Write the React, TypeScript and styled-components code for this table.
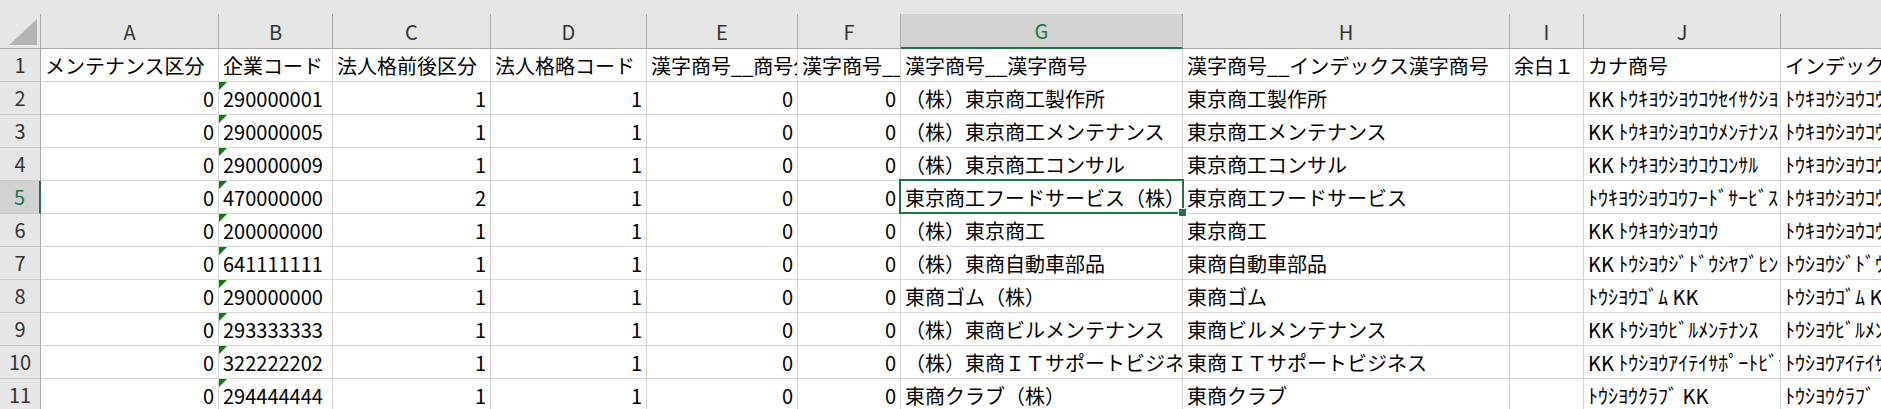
import React from 'react';
import styled, { createGlobalStyle, css } from 'styled-components';

const GlobalStyle = createGlobalStyle`
  html, body {
    margin: 0;
    padding: 0;
    background: #ffffff;
    overflow: hidden;
  }
  body {
    font-family: "Noto Sans CJK JP", "Noto Sans", sans-serif;
  }
`;

const COL_WIDTHS = [41, 178, 114, 158, 156, 151, 103, 282, 327, 74, 197, 220];
const COL_LETTERS = ['A', 'B', 'C', 'D', 'E', 'F', 'G', 'H', 'I', 'J', 'K'];
const SELECTED_COL = 6; // G
const SELECTED_ROW = 5;

type Align = 'left' | 'right';
const ALIGNS: Align[] = ['right', 'left', 'right', 'right', 'right', 'right', 'left', 'left', 'left', 'left', 'left'];

const HEADER_ROW = [
  'メンテナンス区分',
  '企業コード',
  '法人格前後区分',
  '法人格略コード',
  '漢字商号__商号分類',
  '漢字商号__漢字商号区分',
  '漢字商号__漢字商号',
  '漢字商号__インデックス漢字商号',
  '余白１',
  'カナ商号',
  'インデックスカナ商号',
];

const DATA: string[][] = [
  ['0', '290000001', '1', '1', '0', '0', '（株）東京商工製作所', '東京商工製作所', '', 'KK ﾄｳｷﾖｳｼﾖｳｺｳｾｲｻｸｼﾖ', 'ﾄｳｷﾖｳｼﾖｳｺｳｾｲｻｸｼﾖ'],
  ['0', '290000005', '1', '1', '0', '0', '（株）東京商工メンテナンス', '東京商工メンテナンス', '', 'KK ﾄｳｷﾖｳｼﾖｳｺｳﾒﾝﾃﾅﾝｽ', 'ﾄｳｷﾖｳｼﾖｳｺｳﾒﾝﾃﾅﾝｽ'],
  ['0', '290000009', '1', '1', '0', '0', '（株）東京商工コンサル', '東京商工コンサル', '', 'KK ﾄｳｷﾖｳｼﾖｳｺｳｺﾝｻﾙ', 'ﾄｳｷﾖｳｼﾖｳｺｳｺﾝｻﾙ'],
  ['0', '470000000', '2', '1', '0', '0', '東京商工フードサービス（株）', '東京商工フードサービス', '', 'ﾄｳｷﾖｳｼﾖｳｺｳﾌｰﾄﾞｻｰﾋﾞｽ', 'ﾄｳｷﾖｳｼﾖｳｺｳﾌｰﾄﾞｻｰﾋﾞｽ'],
  ['0', '200000000', '1', '1', '0', '0', '（株）東京商工', '東京商工', '', 'KK ﾄｳｷﾖｳｼﾖｳｺｳ', 'ﾄｳｷﾖｳｼﾖｳｺｳ'],
  ['0', '641111111', '1', '1', '0', '0', '（株）東商自動車部品', '東商自動車部品', '', 'KK ﾄｳｼﾖｳｼﾞﾄﾞｳｼﾔﾌﾞﾋﾝ', 'ﾄｳｼﾖｳｼﾞﾄﾞｳｼﾔﾌﾞﾋﾝ'],
  ['0', '290000000', '1', '1', '0', '0', '東商ゴム（株）', '東商ゴム', '', 'ﾄｳｼﾖｳｺﾞﾑ KK', 'ﾄｳｼﾖｳｺﾞﾑ KK'],
  ['0', '293333333', '1', '1', '0', '0', '（株）東商ビルメンテナンス', '東商ビルメンテナンス', '', 'KK ﾄｳｼﾖｳﾋﾞﾙﾒﾝﾃﾅﾝｽ', 'ﾄｳｼﾖｳﾋﾞﾙﾒﾝﾃﾅﾝｽ'],
  ['0', '322222202', '1', '1', '0', '0', '（株）東商ＩＴサポートビジネス', '東商ＩＴサポートビジネス', '', 'KK ﾄｳｼﾖｳｱｲﾃｲｻﾎﾟｰﾄﾋﾞｼﾞﾈｽ', 'ﾄｳｼﾖｳｱｲﾃｲｻﾎﾟｰﾄﾋﾞｼﾞﾈｽ'],
  ['0', '294444444', '1', '1', '0', '0', '東商クラブ（株）', '東商クラブ', '', 'ﾄｳｼﾖｳｸﾗﾌﾞ KK', 'ﾄｳｼﾖｳｸﾗﾌﾞ'],
];

const Sheet = styled.div`
  display: flex;
  flex-direction: column;
  width: 1881px;
  height: 409px;
  overflow: hidden;
  background: #ffffff;
`;

const TopBand = styled.div`
  flex: none;
  height: 14px;
  background: #e6e6e6;
`;

const Grid = styled.div`
  display: grid;
  grid-template-columns: ${COL_WIDTHS.map((w) => `${w}px`).join(' ')};
  grid-template-rows: 35px repeat(11, 33px);
  font-size: 20px;
`;

const CornerCell = styled.div`
  box-sizing: border-box;
  display: flex;
  align-items: flex-end;
  justify-content: flex-end;
  padding: 0 3px 3px 0;
  background: #e6e6e6;
  border-right: 1px solid #ababab;
  border-bottom: 1px solid #ababab;
`;

const CornerTriangle = styled.div`
  width: 28px;
  height: 26px;
  background: #b4b4b4;
  clip-path: polygon(100% 0, 100% 100%, 0 100%);
`;

const ColHeader = styled.div<{ $selected?: boolean }>`
  box-sizing: border-box;
  display: flex;
  align-items: center;
  justify-content: center;
  background: #e6e6e6;
  color: #333333;
  border-right: 1px solid #ababab;
  border-bottom: 1px solid #ababab;
  line-height: 1;
  padding-top: 1px;
  ${(p) =>
    p.$selected &&
    css`
      background: #d2d2d2;
      color: #217346;
      border-bottom: 2px solid #217346;
    `}
`;

const RowHeader = styled.div<{ $selected?: boolean }>`
  box-sizing: border-box;
  display: flex;
  align-items: center;
  justify-content: center;
  background: #e6e6e6;
  color: #333333;
  border-right: 1px solid #ababab;
  border-bottom: 1px solid #c8c8c8;
  line-height: 1;
  ${(p) =>
    p.$selected &&
    css`
      background: #d2d2d2;
      color: #217346;
      border-right: 2px solid #217346;
    `}
`;

const Cell = styled.div<{ $selected?: boolean }>`
  position: relative;
  box-sizing: border-box;
  min-width: 0;
  border-right: 1px solid #d4d4d4;
  border-bottom: 1px solid #d4d4d4;
  color: #000000;
  ${(p) =>
    p.$selected &&
    css`
      z-index: 2;
    `}
`;

const CellText = styled.div<{ $align: Align }>`
  height: 100%;
  padding: 0 4px;
  box-sizing: border-box;
  display: flex;
  align-items: center;
  justify-content: ${(p) => (p.$align === 'right' ? 'flex-end' : 'flex-start')};
  white-space: nowrap;
  overflow: hidden;
`;

const ErrorMark = styled.span`
  position: absolute;
  top: 0;
  left: 0;
  width: 0;
  height: 0;
  border-top: 8px solid #0b7d0b;
  border-right: 8px solid transparent;
`;

const SelectionFrame = styled.div`
  position: absolute;
  top: -2px;
  left: -2px;
  right: -2px;
  bottom: -1px;
  border: 2px solid #217346;
  pointer-events: none;
`;

const FillHandle = styled.span`
  position: absolute;
  right: -5px;
  bottom: -5px;
  width: 7px;
  height: 7px;
  background: #217346;
  border: 1px solid #ffffff;
  box-sizing: content-box;
`;

export default function App() {
  const rows = [HEADER_ROW, ...DATA];
  return (
    <>
      <GlobalStyle />
      <Sheet>
        <TopBand />
        <Grid>
          <CornerCell>
            <CornerTriangle />
          </CornerCell>
          {COL_LETTERS.map((l, i) => (
            <ColHeader key={l} $selected={i === SELECTED_COL}>
              {l}
            </ColHeader>
          ))}
          {rows.map((row, r) => {
            const rowNum = r + 1;
            return (
              <React.Fragment key={rowNum}>
                <RowHeader $selected={rowNum === SELECTED_ROW}>{rowNum}</RowHeader>
                {row.map((value, c) => {
                  const isSelected = rowNum === SELECTED_ROW && c === SELECTED_COL;
                  const align: Align = r === 0 ? 'left' : ALIGNS[c];
                  return (
                    <Cell key={c} $selected={isSelected}>
                      {r > 0 && c === 1 && <ErrorMark />}
                      <CellText $align={align}>{value}</CellText>
                      {isSelected && (
                        <SelectionFrame>
                          <FillHandle />
                        </SelectionFrame>
                      )}
                    </Cell>
                  );
                })}
              </React.Fragment>
            );
          })}
        </Grid>
      </Sheet>
    </>
  );
}
